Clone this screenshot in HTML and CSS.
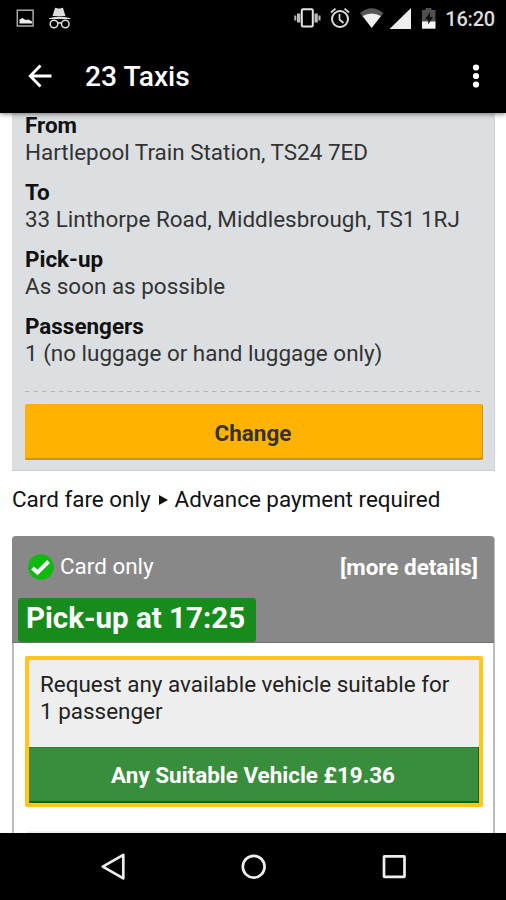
FILE: index.html
```
<!DOCTYPE html>
<html lang="en">
<head>
<meta charset="utf-8">
<title>23 Taxis</title>
<link rel="stylesheet" href="styles.css">
</head>
<body>
<header class="top">
  <div class="status">
    <svg class="status-left" viewBox="0 0 60 38" width="60" height="38">
      <rect x="3.300" y="10.200" width="15.800" height="15.800" fill="none" stroke="#aaa" stroke-width="1.500"/>
      <path d="M5.500 23.500v-4l3-1.500 3 2 3-.5 3.500 2v2z" fill="#eee"/>
      <g fill="#ddd"><path d="M41 8q.6-.6 1.500 0 3 1 5 0 1-.6 1.500 0l2.500 8h-13zM35 18.300q10.500-3.800 21.500 0v.8H35z"/></g>
      <g fill="none" stroke="#ddd" stroke-width="1.500"><circle cx="40" cy="24" r="3.800"/><circle cx="51.300" cy="24" r="3.800"/><path d="M43.700 23.500q2-1.500 4 0"/></g>
    </svg>
    <div class="status-right">
      <svg viewBox="0 0 146 38" width="146" height="38">
        <g fill="#bbb"><path d="M.3 15.500h2v5H.3zM3 13.500h3.300v9H3zM20.500 13.500h3.300v9h-3.300zM24.500 15.500h2v5h-2z"/></g>
        <rect x="7.800" y="9.200" width="11" height="17.200" rx="1.200" fill="none" stroke="#e4e4e4" stroke-width="2"/>
        <g fill="none" stroke="#ddd" stroke-width="2"><circle cx="46" cy="19" r="8"/><path d="M45.500 14v5.500l4 3.500M37 12.500l4.500-3.800M50.500 8.700l4.500 3.800" stroke-width="1.700"/></g>
        <path d="M66 13q11.500-9.500 23.500 0l-3 4-8.800-2-8.700 2z" fill="#555"/>
        <path d="M68.500 16q9-5 18.500 0L77.700 28z" fill="#eee"/>
        <path d="M117 8v21H95.500z" fill="#eee"/>
        <path d="M128 10h3.500V8h6v2h4v12H128z" fill="#505050"/>
        <path d="M128 21.500h13.500v7.200H128z" fill="#f4f4f4"/><path d="M136 12l-5 7.500h3.200v5l4.800-7.500h-3z" fill="#111"/>
      </svg>
      <span class="clock">16:20</span>
    </div>
  </div>
  <div class="toolbar">
    <svg class="back" viewBox="0 0 24 24" width="24" height="24"><path d="M12.500 1.500L2.200 12l10.300 10.500M2.500 12h21" fill="none" stroke="#fff" stroke-width="2.800"/></svg>
    <h1 class="title">23 Taxis</h1>
    <svg class="more" viewBox="0 0 8 24" width="8" height="24"><g fill="#fff"><circle cx="4" cy="3.500" r="3.100"/><circle cx="4" cy="12" r="3.100"/><circle cx="4" cy="20.500" r="3.100"/></g></svg>
  </div>
</header>
<main class="content">
  <section class="trip">
    <dl class="facts">
      <div class="fact"><dt>From</dt><dd>Hartlepool Train Station, TS24 7ED</dd></div>
      <div class="fact"><dt>To</dt><dd>33 Linthorpe Road, Middlesbrough, TS1 1RJ</dd></div>
      <div class="fact"><dt>Pick-up</dt><dd>As soon as possible</dd></div>
      <div class="fact"><dt>Passengers</dt><dd>1 (no luggage or hand luggage only)</dd></div>
    </dl>
    <svg class="divider" width="458" height="2"><path d="M0 .5h458" stroke="#b3b6b8" stroke-dasharray="4.500 4"/></svg>
    <button class="change">Change</button>
  </section>
  <p class="notice"><span>Card fare only</span><svg class="arrow" viewBox="0 0 9 10" width="9" height="10"><path d="M0 0l9 5-9 5z" fill="#111"/></svg><span>Advance payment required</span></p>
  <section class="offer">
    <div class="offer-head">
      <div class="offer-row">
        <svg class="tick" viewBox="0 0 26 26" width="26" height="26"><circle cx="13" cy="13" r="12.800" fill="#0cbb0c"/><path d="M4.500 14l5 4.500L20.500 7.500" fill="none" stroke="#fff" stroke-width="4"/></svg>
        <span class="card-only">Card only</span>
        <a class="details">[more details]</a>
      </div>
      <div class="eta">Pick-up at 17:25</div>
    </div>
    <div class="offer-body">
      <div class="vehicle">
        <p class="desc">Request any available vehicle suitable for<br>1 passenger</p>
        <button class="book">Any Suitable Vehicle £19.36</button>
      </div>
      <div class="vehicle-next"></div>
    </div>
  </section>
</main>
<nav class="nav">
  <svg viewBox="0 0 506 67" width="506" height="67"><g fill="none" stroke="#eee" stroke-width="2.700" stroke-linejoin="round"><path d="M123.300 21.800v23.600L102.800 33.600z"/><circle cx="253.700" cy="33.700" r="10.900"/><rect x="384" y="23.300" width="20.500" height="20.500" rx=".5"/></g></svg>
</nav>
</body>
</html>
```
FILE: styles.css
```
* { box-sizing: border-box; }
body {
  margin: 0;
  width: 506px;
  height: 900px;
  overflow: hidden;
  display: flex;
  flex-direction: column;
  background: #fff;
  color: #111;
  font: 22.45px/27px Roboto, sans-serif;
}
h1, p, dl, dd { margin: 0; }
svg { display: block; flex: none; }
button { border: 0; padding: 0; font: inherit; font-weight: 700; display: block; }

.top { flex: none; height: 113px; background: #000; color: #fff; position: relative; box-shadow: 0 1px 5px rgba(0,0,0,.5); }
.status { height: 38px; display: flex; justify-content: space-between; padding: 0 11px 0 14px; }
.status-right { display: flex; gap: 5px; }
.clock { color: #ddd; font-size: 20px; line-height: 38px; font-weight: 500; letter-spacing: -.2px; }
.toolbar { height: 75px; display: flex; align-items: center; padding: 0 26px 0 28px; }
.title { margin-left: 33px; padding-top: 2px; font-size: 28.2px; line-height: 34px; font-weight: 500; flex: 1; }

.content { flex: 1; min-height: 0; overflow: hidden; padding: 0 11px 0 12px; }
.trip { height: 358px; background: #dbdfe1; padding: 0 13px; border-bottom: 1px solid #cbcdd0; border-right: 1px solid #d0d3d5; }
.facts { display: flow-root; height: 268px; }
.fact { margin-bottom: 13px; height: 54px; }
.fact:first-child { margin-top: -1px; }
dt { font-weight: 700; }
dd { color: #333; white-space: nowrap; }
.divider { margin-top: 10px; }
.change { width: 458px; height: 56px; margin-top: 11px; padding: 2px 2px 0 0; background: #ffb300; color: #333; border-radius: 2px; box-shadow: inset -1px -2px 0 #cf9417; }
.notice { display: flex; align-items: center; height: 27px; margin-top: 15px; white-space: nowrap; }
.arrow { margin: 0 7px 0 8px; }
.offer { margin-top: 23px; height: 320px; border: 2px solid #bdbdbd; border-top: 0; border-radius: 4px 4px 0 0; }
.offer-head { height: 107px; margin: 0 -1px 0 -2px; background: #888; color: #fff; border-radius: 4px 4px 0 0; border-bottom: 1px solid #707070; }
.offer-row { height: 62px; display: flex; align-items: center; padding: 0 16px; }
.card-only { margin-left: 6px; flex: 1; padding-bottom: 2px; }
.details { font-weight: 700; }
.eta { width: 238px; height: 44px; margin-left: 6px; padding-left: 8px; background: #178b1c; border-radius: 3px; font-size: 29.5px; line-height: 41px; font-weight: 700; white-space: nowrap; }
.offer-body { padding: 13px 11px 0; }
.vehicle { width: 458px; height: 151px; border: 4px solid #ffc61c; border-radius: 2px; background: #eee; }
.desc { height: 87px; padding: 11px 0 0 11px; white-space: nowrap; color: #222; }
.book { width: 100%; height: 56px; padding-right: 2px; background: #388e3c; color: #fff; box-shadow: inset -1px -2px 0 #175f1b, inset 0 1px 0 #2a7d2e; }
.vehicle-next { height: 30px; margin-top: 24px; background: #eee; border-radius: 5px; }
.nav { flex: none; height: 67px; background: #000; }
```
